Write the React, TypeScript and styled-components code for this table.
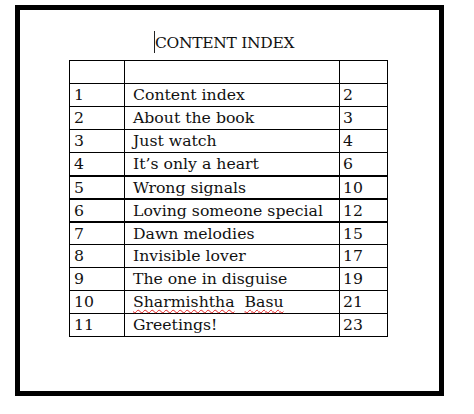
import React from "react";
import styled, { createGlobalStyle } from "styled-components";

const Global = createGlobalStyle`
  html, body { margin: 0; padding: 0; background: #ffffff; }
  body { font-family: "DejaVu Serif", "Liberation Serif", serif; color: #111; }
`;

const Frame = styled.div`
  box-sizing: border-box;
  margin: 5px 0 0 15px;
  width: 429px;
  height: 391px;
  border: 5px solid #000;
  background: #fff;
`;

const Title = styled.div`
  padding: 21px 0 0 134px;
  font-size: 15.5px;
  line-height: 20px;
  height: 20px;
  letter-spacing: -0.3px;
  white-space: nowrap;
`;

const Caret = styled.span`
  display: inline-block;
  width: 1px;
  height: 22px;
  background: #222;
  vertical-align: -5px;
`;

const Table = styled.table`
  margin: 9px 0 0 49px;
  border-collapse: collapse;
  font-size: 15.7px;
`;

const Row = styled.tr<{ $thick?: boolean }>`
  & > td {
    border-top-width: ${(p) => (p.$thick ? "2px" : "1px")};
    height: 23px;
  }
`;

const widths = [55, 215, 48];
const pads = [4, 8, 3];

const Cell = styled.td<{ $col: number }>`
  border: 1px solid #000;
  width: ${(p) => widths[p.$col]}px;
  box-sizing: border-box;
  padding: 2px 0 0 ${(p) => pads[p.$col]}px;
  vertical-align: top;
  line-height: 18px;
  white-space: pre;
`;

const Misspelled = styled.span`
  text-decoration: underline wavy #e02020;
  text-decoration-thickness: 1px;
  text-underline-offset: 2px;
`;

const rows: { n: string; title: React.ReactNode; page: string; thick?: boolean }[] = [
  { n: "1", title: "Content index", page: "2" },
  { n: "2", title: "About the book", page: "3" },
  { n: "3", title: "Just watch", page: "4" },
  { n: "4", title: "It\u2019s only a heart", page: "6" },
  { n: "5", title: "Wrong signals", page: "10", thick: true },
  { n: "6", title: "Loving someone special", page: "12", thick: true },
  { n: "7", title: "Dawn melodies", page: "15", thick: true },
  { n: "8", title: "Invisible lover", page: "17" },
  { n: "9", title: "The one in disguise", page: "19" },
  {
    n: "10",
    title: (
      <>
        <Misspelled>Sharmishtha</Misspelled>{"  "}
        <Misspelled>Basu</Misspelled>
      </>
    ),
    page: "21",
  },
  { n: "11", title: "Greetings!", page: "23" },
];

export default function App() {
  return (
    <>
      <Global />
      <Frame>
        <Title>
          <Caret />
          CONTENT INDEX
        </Title>
        <Table>
          <tbody>
            <Row>
              <Cell $col={0} />
              <Cell $col={1} />
              <Cell $col={2} />
            </Row>
            {rows.map((r) => (
              <Row key={r.n} $thick={r.thick}>
                <Cell $col={0}>{r.n}</Cell>
                <Cell $col={1}>{r.title}</Cell>
                <Cell $col={2}>{r.page}</Cell>
              </Row>
            ))}
          </tbody>
        </Table>
      </Frame>
    </>
  );
}
